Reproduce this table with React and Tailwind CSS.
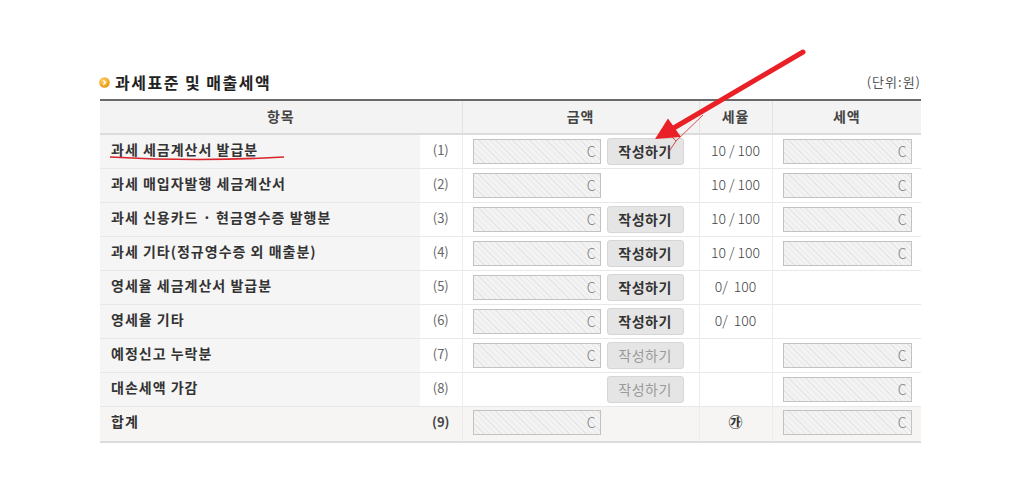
import React from "react";

const font = { fontFamily: '"Noto Sans CJK KR", "Noto Sans", sans-serif' };

const rows = [
  { label: "과세 세금계산서 발급분", no: "(1)", amount: true, btn: "on", rate: "10 / 100", tax: true },
  { label: "과세 매입자발행 세금계산서", no: "(2)", amount: true, btn: null, rate: "10 / 100", tax: true },
  { label: "과세 신용카드 · 현금영수증 발행분", no: "(3)", amount: true, btn: "on", rate: "10 / 100", tax: true },
  { label: "과세 기타(정규영수증 외 매출분)", no: "(4)", amount: true, btn: "on", rate: "10 / 100", tax: true },
  { label: "영세율 세금계산서 발급분", no: "(5)", amount: true, btn: "on", rate: "0/  100", tax: false },
  { label: "영세율 기타", no: "(6)", amount: true, btn: "on", rate: "0/  100", tax: false },
  { label: "예정신고 누락분", no: "(7)", amount: true, btn: "off", rate: "", tax: true },
  { label: "대손세액 가감", no: "(8)", amount: false, btn: "off", rate: "", tax: true },
];

function Field({ w }) {
  return (
    <div
      className={`${w} h-[25px] border border-[#c2c2c2] flex items-center justify-end pr-[4px] text-[14px] font-light text-[#7a7a7a] bg-[repeating-linear-gradient(45deg,#f3f3f3_0px,#f3f3f3_3px,#e6e6e6_3px,#e6e6e6_4px)]`}
    >
      C
    </div>
  );
}

function Btn({ state }) {
  return (
    <div
      className={`w-[77px] h-[27px] rounded-[3px] bg-[#e5e5e5] border border-[#d6d6d6] flex items-center justify-center text-[14px] tracking-[0.5px] ${
        state === "on" ? "font-bold text-[#333]" : "text-[#9a9a9a]"
      }`}
    >
      작성하기
    </div>
  );
}

export default function App() {
  return (
    <div className="relative w-[1012px] h-[480px] bg-white overflow-hidden" style={font}>
      <div className="pt-[72px] pl-[100px] w-[921px]">
        <div className="h-[20px] flex items-center justify-between mb-[7px]">
          <div className="flex items-center">
            <svg width="11" height="11" viewBox="0 0 11 11" className="mr-[5px] -ml-[1px]">
              <defs>
                <radialGradient id="bg1" cx="40%" cy="35%" r="70%">
                  <stop offset="0%" stopColor="#ffd36b" />
                  <stop offset="100%" stopColor="#e8930c" />
                </radialGradient>
              </defs>
              <circle cx="5.5" cy="5.5" r="5.3" fill="url(#bg1)" />
              <path d="M4.3 3.3 L6.5 5.5 L4.3 7.7" stroke="#fff" strokeWidth="1.3" fill="none" />
            </svg>
            <span className="text-[16px] font-bold tracking-[1.5px] text-[#222]">과세표준 및 매출세액</span>
          </div>
          <span className="text-[13px] text-[#555] tracking-[1px]">(단위:원)</span>
        </div>

        <table className="table-fixed border-collapse w-[821px] text-[#333]">
          <colgroup>
            <col className="w-[320px]" />
            <col className="w-[42px]" />
            <col className="w-[237px]" />
            <col className="w-[73px]" />
            <col className="w-[149px]" />
          </colgroup>
          <thead>
            <tr className="h-[34px] bg-[#f3f3f3] border-t-2 border-t-[#6a6a6a] border-b-2 border-b-[#dcdcdc]">
              <th colSpan={2} className="pb-[2px] text-[14px] font-bold text-[#444] tracking-[1px] border-r border-[#e2e2e2]">항목</th>
              <th className="pb-[2px] text-[14px] font-bold text-[#444] tracking-[1px] border-r border-[#e2e2e2]">금액</th>
              <th className="pb-[2px] text-[14px] font-bold text-[#444] tracking-[1px] border-r border-[#e2e2e2]">세율</th>
              <th className="pb-[2px] text-[14px] font-bold text-[#444] tracking-[1px]">세액</th>
            </tr>
          </thead>
          <tbody>
            {rows.map((r, i) => (
              <tr key={i} className="h-[34px] border-b border-[#e8e8e8]">
                <td className="bg-[#f5f5f5] pl-[11px] pb-[3px] text-[14px] font-semibold tracking-[1px] text-[#333] whitespace-nowrap">
                  {r.label}
                </td>
                <td className="pb-[3px] text-center text-[13px] text-[#666] border-r border-[#ececec]">{r.no}</td>
                <td className="border-r border-[#ececec]">
                  <div className="flex items-center pl-[10px] gap-[6px]">
                    {r.amount ? <Field w="w-[128px]" /> : <div className="w-[128px] h-[25px]" />}
                    {r.btn && <Btn state={r.btn} />}
                  </div>
                </td>
                <td className="pb-[2px] text-center text-[14px] font-light text-[#444] border-r border-[#ececec] whitespace-pre">{r.rate}</td>
                <td className="pl-[10px]">{r.tax && <Field w="w-[129px]" />}</td>
              </tr>
            ))}
            <tr className="h-[36px] bg-[#f6f5f4] border-b-2 border-[#dcdcdc]">
              <td className="pl-[11px] pb-[4px] text-[14px] font-bold tracking-[1px] text-[#333]">합계</td>
              <td className="pb-[4px] text-center text-[13px] font-bold text-[#444] border-r border-[#ececec]">(9)</td>
              <td className="pb-[2px] border-r border-[#ececec]">
                <div className="flex items-center pl-[10px]">
                  <Field w="w-[128px]" />
                </div>
              </td>
              <td className="pb-[4px] text-center text-[14px] font-bold text-[#333] border-r border-[#ececec]">㉮</td>
              <td className="pb-[2px] pl-[10px]">
                <Field w="w-[129px]" />
              </td>
            </tr>
          </tbody>
        </table>
      </div>

      <svg className="absolute inset-0 pointer-events-none" width="1012" height="480" viewBox="0 0 1012 480">
        <path d="M110 157 Q 200 162 284 157" stroke="#d8242a" strokeWidth="1.6" fill="none" />
        <line x1="803" y1="52" x2="672" y2="129" stroke="#ea2027" strokeWidth="5" strokeLinecap="round" />
        <polygon points="655,139 668,118.5 681,137" fill="#ea2027" />
        <path d="M703 115 L676 141 L668 153 M676 141 L672 137" stroke="#c9282c" strokeWidth="1" fill="none" opacity="0.8" />
      </svg>
    </div>
  );
}
